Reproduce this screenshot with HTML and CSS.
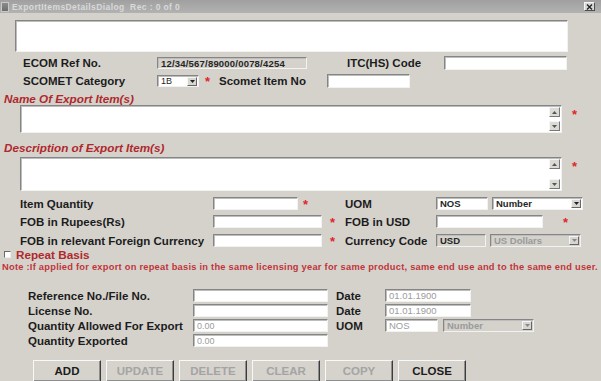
FILE: index.html
```html
<!DOCTYPE html>
<html>
<head>
<meta charset="utf-8">
<title>ExportItemsDetailsDialog</title>
<link rel="stylesheet" href="styles.css">
</head>
<body>
<div class="dialog">
  <div class="titlebar">
    <span class="app-icon"></span>
    <span class="title">ExportItemsDetailsDialog&nbsp;&nbsp;Rec : 0 of 0</span>
    <span class="close-btn"><svg width="7" height="6" viewBox="0 0 7 6"><path d="M1 0.5 L6 5.5 M6 0.5 L1 5.5" stroke="#222" stroke-width="1.4"/></svg></span>
  </div>

  <div class="field memo-top"></div>

  <div class="row row-top">
    <span class="lbl lbl-a">ECOM Ref No.</span>
    <div class="field disabled ecom-val">12/34/567/89000/0078/4254</div>
    <span class="lbl lbl-itc">ITC(HS) Code</span>
    <div class="field itc"></div>
  </div>

  <div class="row row-top row-scomet">
    <span class="lbl lbl-a">SCOMET Category</span>
    <div class="field combo combo-cat"><span class="combo-text">1B</span><span class="dd"><svg width="5" height="3" viewBox="0 0 5 3"><path d="M0 0H5L2.5 3Z" fill="#222"/></svg></span></div>
    <span class="star star-cat">*</span>
    <span class="lbl lbl-sino">Scomet Item No</span>
    <div class="field sino"></div>
  </div>

  <div class="heading">Name Of Export Item(s)</div>
  <div class="memo-row">
    <div class="field memo memo-name">
      <span class="sb sb-up"><svg width="5" height="3" viewBox="0 0 5 3"><path d="M0 3H5L2.5 0Z" fill="#555"/></svg></span>
      <span class="sb sb-down"><svg width="5" height="3" viewBox="0 0 5 3"><path d="M0 0H5L2.5 3Z" fill="#555"/></svg></span>
    </div>
    <span class="star star-memo">*</span>
  </div>

  <div class="heading heading-desc">Description of Export Item(s)</div>
  <div class="memo-row memo-row-desc">
    <div class="field memo memo-desc">
      <span class="sb sb-up"><svg width="5" height="3" viewBox="0 0 5 3"><path d="M0 3H5L2.5 0Z" fill="#555"/></svg></span>
      <span class="sb sb-down"><svg width="5" height="3" viewBox="0 0 5 3"><path d="M0 0H5L2.5 3Z" fill="#555"/></svg></span>
    </div>
    <span class="star star-memo">*</span>
  </div>

  <div class="row row-mid row-qty">
    <div class="left">
      <span class="lbl lbl-b">Item Quantity</span>
      <div class="field in-qty"></div>
      <span class="star">*</span>
    </div>
    <span class="lbl lbl-r">UOM</span>
    <div class="field in-nos"><span class="val dark">NOS</span></div>
    <div class="field combo combo-r"><span class="combo-text">Number</span><span class="dd"><svg width="5" height="3" viewBox="0 0 5 3"><path d="M0 0H5L2.5 3Z" fill="#222"/></svg></span></div>
  </div>

  <div class="row row-mid row-fob">
    <div class="left">
      <span class="lbl lbl-b">FOB in Rupees(Rs)</span>
      <div class="field in-fob"></div>
      <span class="star star-fob">*</span>
    </div>
    <span class="lbl lbl-r">FOB in USD</span>
    <div class="field in-usd"></div>
    <span class="star star-usd">*</span>
  </div>

  <div class="row row-mid row-cur">
    <div class="left">
      <span class="lbl lbl-b">FOB in relevant Foreign Currency</span>
      <div class="field in-fob"></div>
      <span class="star star-fob">*</span>
    </div>
    <span class="lbl lbl-r">Currency Code</span>
    <div class="field disabled in-cc"><span class="val dark">USD</span></div>
    <div class="field disabled combo combo-r"><span class="combo-text grey">US Dollars</span><span class="dd"><svg width="5" height="3" viewBox="0 0 5 3"><path d="M0 0H5L2.5 3Z" fill="#888"/></svg></span></div>
  </div>

  <div class="repeat">
    <span class="check"></span>
    <span class="repeat-lbl">Repeat Basis</span>
  </div>
  <div class="note">Note :If applied for export on repeat basis in the same licensing year for same product, same end use and to the same end user.</div>

  <div class="row row-bot row-ref">
    <span class="lbl lbl-c">Reference No./File No.</span>
    <div class="field in-ref"></div>
    <span class="lbl lbl-d">Date</span>
    <div class="field in-date"><span class="val grey">01.01.1900</span></div>
  </div>
  <div class="row row-bot">
    <span class="lbl lbl-c">License No.</span>
    <div class="field in-ref"></div>
    <span class="lbl lbl-d">Date</span>
    <div class="field in-date"><span class="val grey">01.01.1900</span></div>
  </div>
  <div class="row row-bot">
    <span class="lbl lbl-c">Quantity Allowed For Export</span>
    <div class="field in-ref"><span class="val grey thin">0.00</span></div>
    <span class="lbl lbl-d">UOM</span>
    <div class="field in-nos2"><span class="val grey">NOS</span></div>
    <div class="field disabled combo combo-b"><span class="combo-text grey">Number</span><span class="dd"><svg width="5" height="3" viewBox="0 0 5 3"><path d="M0 0H5L2.5 3Z" fill="#888"/></svg></span></div>
  </div>
  <div class="row row-bot">
    <span class="lbl lbl-c">Quantity Exported</span>
    <div class="field in-ref"><span class="val grey thin">0.00</span></div>
  </div>

  <div class="buttons">
    <button class="btn">ADD</button>
    <button class="btn off">UPDATE</button>
    <button class="btn off">DELETE</button>
    <button class="btn off">CLEAR</button>
    <button class="btn off">COPY</button>
    <button class="btn">CLOSE</button>
  </div>
</div>
</body>
</html>
```

FILE: styles.css
```css
* { box-sizing: border-box; }
html, body { margin: 0; padding: 0; }
body {
  width: 601px;
  height: 381px;
  overflow: hidden;
  background: #d5d2cc;
  font-family: "Liberation Sans", Arial, sans-serif;
  color: #1c1c1c;
}
.dialog { width: 601px; height: 381px; overflow: hidden; }

/* title bar */
.titlebar {
  height: 13px;
  display: flex;
  align-items: center;
  background: linear-gradient(#a0a0a0, #b2b2b2);
}
.app-icon {
  width: 8px;
  height: 10px;
  margin-left: 1px;
  background: linear-gradient(#8c8c8c, #6e6e6e);
  border: 1px solid #c8c8c8;
}
.title {
  margin-left: 3px;
  font-size: 8.5px;
  font-weight: bold;
  letter-spacing: 0.4px;
  color: #d9d9d9;
  white-space: nowrap;
}
.close-btn {
  margin-left: auto;
  margin-right: 6px;
  width: 11px;
  height: 9px;
  display: flex;
  align-items: center;
  justify-content: center;
  background: #d8d8d8;
  border: 1px solid;
  border-color: #f4f4f4 #505050 #505050 #f4f4f4;
}

/* generic field */
.field {
  background: #fff;
  border: 1px solid;
  border-color: #858585 #f2f2f2 #f2f2f2 #858585;
  box-shadow: inset 1px 1px 0 #bdbdbd;
  display: flex;
  align-items: center;
  flex: none;
}
.field.disabled { background: #d5d2cc; }

.memo-top { margin: 7px 0 0 15px; width: 553px; height: 32px; }

.row { display: flex; align-items: center; }
.lbl { font-size: 11.5px; font-weight: bold; white-space: nowrap; flex: none; }

.row-top { margin-top: 4px; height: 14px; padding-left: 23px; }
.lbl-a { width: 134px; }
.ecom-val {
  width: 150px;
  height: 12px;
  padding-left: 3px;
  font-size: 9.5px;
  font-weight: bold;
  color: #262626;
  letter-spacing: 0.2px;
}
.lbl-itc { margin-left: 40px; width: 97px; }
.itc { width: 123px; height: 14px; }

.combo { justify-content: space-between; padding-left: 3px; padding-right: 1px; }
.combo-text { font-size: 9.5px; font-weight: bold; color: #262626; }
.combo-text.grey { color: #9a9a9a; }
.dd {
  width: 10px;
  height: 9px;
  display: flex;
  align-items: center;
  justify-content: center;
  background: #d8d6d0;
  border: 1px solid;
  border-color: #f6f6f6 #666 #666 #f6f6f6;
}
.combo-cat { width: 42px; height: 12px; }
.combo-cat .combo-text { font-weight: normal; font-size: 9px; }

.star { color: #e0262a; font-size: 13px; font-weight: bold; line-height: 10px; height: 8px; flex: none; }
.star-cat { margin-left: 6px; width: 8px; }
.lbl-sino { margin-left: 6px; width: 108px; }
.sino { width: 83px; height: 14px; }

.heading {
  margin-top: 4px;
  height: 13px;
  line-height: 13px;
  padding-left: 4px;
  font-size: 11.7px;
  font-weight: bold;
  font-style: italic;
  color: #b0282c;
}
.heading-desc { margin-top: 8px; }

.memo-row { display: flex; align-items: flex-start; padding-left: 20px; }
.memo-row-desc { margin-top: 3px; }
.memo { position: relative; width: 542px; }
.memo-name { height: 28px; }
.memo-desc { height: 34px; }
.star-memo { margin-left: 10px; margin-top: 5px; }
.sb {
  position: absolute;
  right: 1px;
  width: 11px;
  height: 10px;
  display: flex;
  align-items: center;
  justify-content: center;
  background: #dcdad5;
  border: 1px solid;
  border-color: #f6f6f6 #777 #777 #f6f6f6;
}
.sb-up { top: 1px; }
.sb-down { bottom: 1px; }

/* middle grid */
.row-mid { height: 13px; padding-left: 20px; }
.row-qty { margin-top: 6px; }
.row-fob { margin-top: 5px; }
.row-cur { margin-top: 6px; }
.left { width: 325px; display: flex; align-items: center; flex: none; }
.lbl-b { width: 193px; }
.in-qty { width: 85px; height: 13px; }
.in-qty + .star { margin-left: 5px; }
.in-fob { width: 109px; height: 13px; }
.star-fob { margin-left: 8px; }
.lbl-r { width: 91px; }
.in-nos { width: 52px; height: 13px; padding-left: 3px; }
.combo-r { width: 91px; height: 13px; margin-left: 4px; }
.in-usd { width: 107px; height: 13px; }
.star-usd { margin-left: 20px; }
.in-cc { width: 50px; height: 13px; padding-left: 3px; background: #cfccc6; }
.val { font-size: 9.5px; font-weight: bold; }
.val.dark { color: #262626; }
.val.grey { color: #9c9c9c; font-weight: normal; }
.val.thin { font-size: 9px; }

.repeat { margin-top: 1px; height: 12px; display: flex; align-items: center; padding-left: 4px; }
.check {
  width: 7px;
  height: 7px;
  background: #fff;
  border: 1px solid;
  border-color: #6a6a6a #eee #eee #6a6a6a;
}
.repeat-lbl { margin-left: 5px; font-size: 11.7px; font-weight: bold; color: #b0282c; }
.note {
  margin-top: 2px;
  height: 10px;
  line-height: 10px;
  padding-left: 2px;
  font-size: 9.3px;
  letter-spacing: 0.25px;
  font-weight: bold;
  color: #c0353a;
  white-space: nowrap;
}

/* bottom block */
.row-bot { height: 13px; margin-top: 2px; padding-left: 28px; }
.row-ref { margin-top: 17px; }
.lbl-c { width: 165px; font-size: 11.5px; }
.in-ref { width: 135px; height: 13px; padding-left: 3px; }
.lbl-d { margin-left: 8px; width: 49px; font-size: 11.5px; }
.in-date { width: 86px; height: 13px; padding-left: 3px; }
.in-nos2 { width: 53px; height: 13px; padding-left: 3px; }
.combo-b { width: 91px; height: 13px; margin-left: 5px; }

.buttons { display: flex; gap: 5px; margin-top: 13px; padding-left: 33px; }
.btn {
  width: 68px;
  height: 22px;
  padding: 0;
  margin: 0;
  background: #d6d3cd;
  border: 1px solid;
  border-color: #f8f8f8 #3c3c3c #3c3c3c #f8f8f8;
  box-shadow: inset -1px -1px 0 #8e8e8e;
  font-family: "Liberation Sans", Arial, sans-serif;
  font-size: 11.5px;
  font-weight: bold;
  color: #1c1c1c;
  display: flex;
  align-items: flex-start;
  justify-content: center;
  padding-top: 4px;
}
.btn.off { color: #a4a4a4; }
```
